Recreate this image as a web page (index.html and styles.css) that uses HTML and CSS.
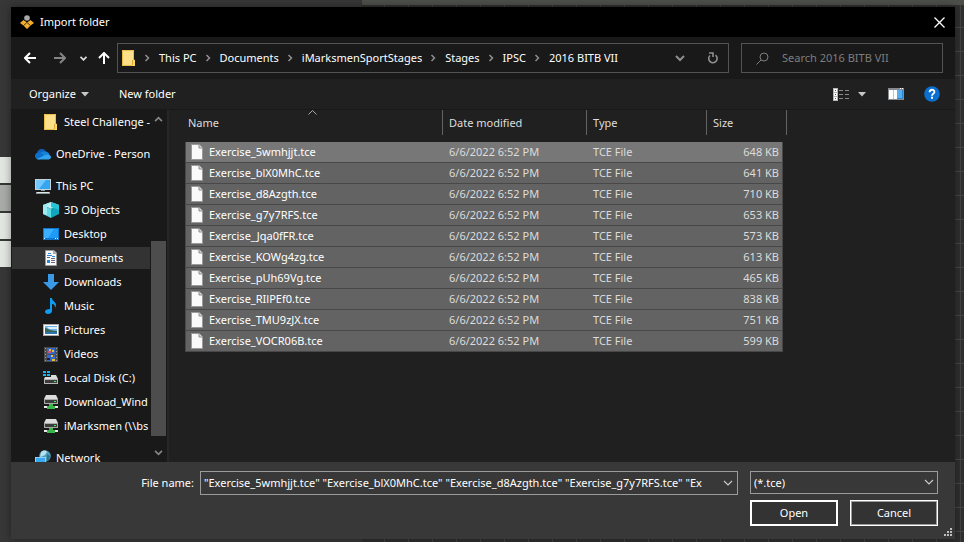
FILE: index.html
```html
<!DOCTYPE html>
<html lang="en">
<head>
<meta charset="utf-8">
<title>Import folder</title>
<link rel="stylesheet" href="styles.css">
</head>
<body>
<svg class="defs" aria-hidden="true">
  <symbol id="folder" viewBox="0 0 14 16"><path fill="#ffe08a" d="M0 0h12v16H0z"/><path fill="none" stroke="#e9bd46" d="M.5.500h11v9.500h1v5.500H.5z"/><path fill="#ffd968" d="M10 10h3v6h-3z"/><path fill="#dca92e" d="M10 10h1v5h-1z"/></symbol>
  <symbol id="crumb" viewBox="0 0 6 8"><path fill="none" stroke="#8f8f8f" stroke-width="1.500" d="M1.500 1l3 3-3 3"/></symbol>
  <symbol id="down" viewBox="0 0 10 7"><path fill="none" stroke="currentColor" stroke-width="1.200" d="M1 1l4 4 4-4"/></symbol>
  <symbol id="tri" viewBox="0 0 8 5"><path fill="#c8c8c8" d="M0 0h8L4 4.500z"/></symbol>
  <symbol id="file" viewBox="0 0 12 16"><path fill="#fafafa" stroke="#9b9b9b" d="M.5.500H8L11.500 4v11.500H.5z"/><path fill="#ddd" stroke="#8a8a8a" d="M8 .500V4h3.500"/></symbol>
  <symbol id="netdrive" viewBox="0 0 16 16"><path fill="#dcdcdc" d="M3 1h10l2 4H1z"/><path fill="#a9a9a9" d="M1 5h14v5H1z"/><path fill="#3b3b3b" d="M2 6h12v3H2z"/><path fill="#3ef04a" d="M11 7h2v1h-2z"/><path fill="#e9e9e9" d="M1 12h14v2H1z"/><path fill="#39b54a" d="M6 10h4v2h2v3H4v-3h2z"/></symbol>
</svg>

<div class="backdrop" aria-hidden="true">
  <div class="side"><i></i><i class="dim"></i><i></i><i></i></div>
  <div class="canvas"></div>
</div>

<main class="dialog">
  <header class="titlebar">
    <svg width="14" height="14" viewBox="0 0 14 14"><path fill="#f2ad2e" d="M3.500 5L7 7.500 10.500 5 14 8l-3.500 2.500L7 14l-3.500-3.500L0 8z"/><path fill="none" stroke="#5b3c08" d="M3.500 10.500L7 7.500l3.500 3"/><circle cx="7" cy="3" r="2.800" fill="#a9a9a9"/></svg>
    <h1>Import folder</h1>
    <button class="close" aria-label="Close"><svg width="11" height="11" viewBox="0 0 11 11"><path stroke="#fff" stroke-width="1.300" d="M.5.500l10 10M10.500.500l-10 10"/></svg></button>
  </header>

  <nav class="navbar" aria-label="Location">
    <div class="history">
      <button aria-label="Back"><svg width="12" height="12" viewBox="0 0 12 12"><path fill="none" stroke="#fff" stroke-width="2" d="M12 6H1.500M6 1L1 6l5 5"/></svg></button>
      <button class="forward" aria-label="Forward"><svg width="12" height="12" viewBox="0 0 12 12"><path fill="none" stroke="#858585" stroke-width="2" d="M0 6h10.500M6 1l5 5-5 5"/></svg></button>
      <button class="recent" aria-label="Recent locations"><svg width="7" height="5" viewBox="0 0 7 5"><path fill="none" stroke="#ddd" stroke-width="1.800" d="M.5.800l3 3 3-3"/></svg></button>
      <button class="up" aria-label="Up"><svg width="12" height="12" viewBox="0 0 12 12"><path fill="none" stroke="#fff" stroke-width="2" d="M6 12V1.500M1 6l5-5 5 5"/></svg></button>
    </div>
    <div class="address">
      <svg class="place" width="14" height="16"><use href="#folder"/></svg>
      <ol>
        <li><svg width="6" height="8"><use href="#crumb"/></svg><a href="#">This PC</a></li>
        <li><svg width="6" height="8"><use href="#crumb"/></svg><a href="#">Documents</a></li>
        <li><svg width="6" height="8"><use href="#crumb"/></svg><a href="#">iMarksmenSportStages</a></li>
        <li><svg width="6" height="8"><use href="#crumb"/></svg><a href="#">Stages</a></li>
        <li><svg width="6" height="8"><use href="#crumb"/></svg><a href="#">IPSC</a></li>
        <li><svg width="6" height="8"><use href="#crumb"/></svg><a href="#">2016 BITB VII</a></li>
      </ol>
      <button class="history-list" aria-label="Previous locations"><svg width="10" height="7" viewBox="0 0 10 7"><path fill="none" stroke="#8f8f8f" stroke-width="2" d="M1 1l4 4 4-4"/></svg></button>
      <button class="refresh" aria-label="Refresh"><svg width="12" height="12" viewBox="0 0 12 12"><path fill="none" stroke="#8f8f8f" stroke-width="1.600" d="M8.500 3.200A4.200 4.200 0 1 1 3 3.500M2 1h4v4"/></svg></button>
    </div>
    <div class="search">
      <svg width="13" height="13" viewBox="0 0 13 13"><circle cx="8" cy="5" r="4" fill="none" stroke="#7d7d7d"/><path stroke="#7d7d7d" d="M5 8L.5 12.500"/></svg>
      <input type="search" aria-label="Search 2016 BITB VII" placeholder="Search 2016 BITB VII">
    </div>
  </nav>

  <div class="toolbar">
    <button>Organize <svg width="8" height="5"><use href="#tri"/></svg></button>
    <button>New folder</button>
    <span class="tools">
      <button aria-label="Change view"><svg width="16" height="13" viewBox="0 0 16 13"><path fill="#b5b5b5" d="M0 0h5v13H0z"/><path fill="#fff" d="M1 1h3v3H1zM1 5h3v3H1zM1 9h3v3H1z"/><path fill="#555" d="M2 2h1v1H2zM2 6h1v1H2z"/><path fill="#c33" d="M2 10h1v1H2z"/><path fill="#8a8a8a" d="M6 2h4v1H6zM12 2h4v1h-4zM6 6h4v1H6zM12 6h4v1h-4zM6 10h4v1H6zM12 10h4v1h-4z"/></svg></button>
      <button class="options" aria-label="View options"><svg width="8" height="5"><use href="#tri"/></svg></button>
      <button class="preview" aria-label="Preview pane"><svg width="16" height="12" viewBox="0 0 16 12"><path fill="#858b91" d="M0 0h16v12H0z"/><path fill="#fff" d="M1 2h4v9H1zM5.500 2H9v9H5.500z"/><path fill="#54aef0" d="M9 2h6v9H9z"/><path fill="#fff" d="M12 0h1v1h-1zM14 0h1v1h-1z"/><path fill="#2d86d4" d="M14 2h1v9H9v-1h5z"/></svg></button>
      <button class="help" aria-label="Help"><svg width="16" height="16" viewBox="0 0 16 16"><circle cx="8" cy="8" r="7.800" fill="#0a6fd0"/><path fill="none" stroke="#fff" stroke-width="1.800" d="M5.600 6.200C5.600 3 10.400 3 10.400 5.900 10.400 7.600 8 7.700 8 9.800"/><path fill="#fff" d="M7 10.800h2v2H7z"/></svg></button>
    </span>
  </div>

  <div class="content">
    <div class="pane">
      <ul class="tree">
        <li class="sub"><svg width="16" height="16"><use href="#folder"/></svg>Steel Challenge -</li>
        <li class="root"><svg width="16" height="16" viewBox="0 0 16 16"><path fill="#0f5fb8" d="M2 8C2 5 4 3 7 3c2 0 3.500 1 4 3l-6 5z"/><path fill="#1583d8" d="M10 5.500c3 0 4.500 2 4.500 4L9 12 4 8c2-2.500 4-2.500 6-2.500z"/><path fill="#0d6fcb" d="M0 10c0-2 1.500-3.500 3.500-3.500C5.500 6.500 7 8 9 9l-5 4.500C1.500 13.500 0 12 0 10z"/><path fill="#2ea5ee" d="M2 13l8-4c2-1.200 6-.500 6 2 0 1.500-1 2.500-2.500 2.500H4c-1 0-1.500 0-2-.500z"/></svg>OneDrive - Person</li>
        <li class="root"><svg width="16" height="16" viewBox="0 0 16 16"><path fill="#c3d3dc" d="M0 1h16v11H0z"/><path fill="#36a5ef" d="M1 2h14v9H1z"/><path fill="#72c7fb" d="M1 2h10L4 11H1z"/><path fill="#8e9aa2" d="M6 12h4v1H6zM1 14h14v2H1z"/><path fill="#dfe7eb" d="M2 14h12v1H2z"/></svg>This PC</li>
        <li class="sub"><svg width="16" height="16" viewBox="0 0 16 16"><path fill="#b9f1f5" d="M8 0l8 3-8 4-8-4z"/><path fill="#5fd9e3" d="M0 3l8 4v9l-8-4z"/><path fill="#0fa6be" d="M16 3L8 7v9l8-4z"/><path fill="#24c4d6" d="M8 0l8 3v5L8 5z"/><path fill="#9debf0" d="M8 0L4 3v10l-4-1V3z"/></svg>3D Objects</li>
        <li class="sub"><svg width="16" height="16" viewBox="0 0 16 16"><path fill="#1276cc" d="M0 2h16v12H0z"/><path fill="#1a9cf7" d="M1 3h14v9H1z"/><path fill="#3bb0ff" d="M1 3h10L5 12H1z"/><path fill="#fff" d="M1 12h1v1H1zM12 12h1v1h-1zM14 12h1v1h-1z"/></svg>Desktop</li>
        <li class="sub current"><svg width="16" height="16" viewBox="0 0 16 16"><path fill="#f8f8f8" stroke="#999" d="M2.500.500H11L13.500 3v12.500h-11z"/><path fill="#aaa" d="M10 0v4h4z"/><path fill="#2b88d8" d="M5 3h3v1H5zM4 5h5v1H4zM9 6h3v1H9zM4 10h3v3H4z"/><path fill="#667" d="M4 7h3v1H4zM8 8h4v1H8zM8 10h4v1H8zM8 12h4v1H8z"/></svg>Documents</li>
        <li class="sub"><svg width="16" height="16" viewBox="0 0 16 16"><path fill="#3b9ae8" d="M5 0h6v8h5l-8 8-8-8h5z"/></svg>Downloads</li>
        <li class="sub"><svg width="16" height="16" viewBox="0 0 16 16"><path fill="#109bf0" d="M7 0h2c0 3 4 4 4 7 0 1-.500 2-1 3 .200-3-1-4-3-4v7c0 2-2 3-4 3s-3-1-3-2.500S4 11 7 11z"/></svg>Music</li>
        <li class="sub"><svg width="16" height="16" viewBox="0 0 16 16"><path fill="#a9a9a9" d="M0 2h16v12H0z"/><path fill="#fff" d="M1 3h14v10H1z"/><path fill="#6eb3e4" d="M2 4h12v8H2z"/><path fill="#dceefa" d="M4 5h10v2H6z"/><path fill="#3a6658" d="M2 6c3 0 4 3 12 3v1H2z"/><path fill="#2a75ad" d="M2 10h12v2H2z"/></svg>Pictures</li>
        <li class="sub"><svg width="16" height="16" viewBox="0 0 16 16"><path fill="#4c4c4c" d="M1 1h14v15H1z"/><path fill="#3468c9" d="M4 2h8v6H4zM4 9h8v6H4z"/><path fill="#e3bb3b" d="M6 3h2v2H6zM9 4h2v2H9zM8 9h2v2H8zM9 13h3v2H9z"/><path fill="#cb527b" d="M5 5h3v2H5z"/><path fill="#17213f" d="M4 12h3v2H4z"/><path stroke="#999" stroke-dasharray="1 2" d="M2.500 2v14M13.500 2v14"/></svg>Videos</li>
        <li class="sub"><svg width="16" height="16" viewBox="0 0 16 16"><path fill="#13b5f4" d="M0 1h3v2H0zM4 1h3v2H4zM0 4h3v2H0zM4 4h3v2H4z"/><path fill="#dcdcdc" d="M8 5h5l2 4H1l1-2h6z"/><path fill="#b5b5b5" d="M1 9h14v5H1z"/><path fill="#3b3b3b" d="M2 10h12v3H2z"/><path fill="#3ef04a" d="M11 11h2v1h-2z"/></svg>Local Disk (C:)</li>
        <li class="sub"><svg width="16" height="16"><use href="#netdrive"/></svg>Download_Wind</li>
        <li class="sub"><svg width="16" height="16"><use href="#netdrive"/></svg>iMarksmen (\\bs</li>
        <li class="root"><svg width="16" height="16" viewBox="0 0 16 16"><circle cx="10" cy="6" r="5.800" fill="#4f9dbd"/><path fill="#b7e1ec" d="M6 2c2-2 5-2 6 0l-2 3-2 1-3 1z"/><path fill="#2f748f" d="M12 4l3 2-1 4-2 1z"/><path fill="#8dd3fb" d="M0 7h11v8H0z"/><path fill="#3aa9f2" d="M1 8h9v6H1z"/></svg>Network</li>
      </ul>
      <div class="scrollbar" aria-hidden="true">
        <svg width="9" height="6" viewBox="0 0 10 7"><path fill="none" stroke="#858585" stroke-width="2" d="M1 6l4-4 4 4"/></svg>
        <div class="track"><div class="thumb"></div></div>
        <svg width="9" height="6" viewBox="0 0 10 7"><path fill="none" stroke="#858585" stroke-width="2" d="M1 1l4 4 4-4"/></svg>
      </div>
    </div>

    <div class="files">
      <table>
        <colgroup><col class="c-name"><col class="c-date"><col class="c-type"><col class="c-size"><col class="c-end"></colgroup>
        <thead><tr>
          <th><span>Name</span><svg class="sort" width="9" height="5" viewBox="0 0 9 5"><path fill="none" stroke="#aaa" d="M.5 4.500l4-4 4 4"/></svg></th>
          <th><span>Date modified</span></th><th><span>Type</span></th><th class="last"><span>Size</span></th><td class="end"></td>
        </tr></thead>
        <tbody>
          <tr><td><svg width="12" height="16"><use href="#file"/></svg>Exercise_5wmhjjt.tce</td><td>6/6/2022 6:52 PM</td><td>TCE File</td><td>648 KB</td></tr>
          <tr><td><svg width="12" height="16"><use href="#file"/></svg>Exercise_blX0MhC.tce</td><td>6/6/2022 6:52 PM</td><td>TCE File</td><td>641 KB</td></tr>
          <tr><td><svg width="12" height="16"><use href="#file"/></svg>Exercise_d8Azgth.tce</td><td>6/6/2022 6:52 PM</td><td>TCE File</td><td>710 KB</td></tr>
          <tr><td><svg width="12" height="16"><use href="#file"/></svg>Exercise_g7y7RFS.tce</td><td>6/6/2022 6:52 PM</td><td>TCE File</td><td>653 KB</td></tr>
          <tr><td><svg width="12" height="16"><use href="#file"/></svg>Exercise_Jqa0fFR.tce</td><td>6/6/2022 6:52 PM</td><td>TCE File</td><td>573 KB</td></tr>
          <tr><td><svg width="12" height="16"><use href="#file"/></svg>Exercise_KOWg4zg.tce</td><td>6/6/2022 6:52 PM</td><td>TCE File</td><td>613 KB</td></tr>
          <tr><td><svg width="12" height="16"><use href="#file"/></svg>Exercise_pUh69Vg.tce</td><td>6/6/2022 6:52 PM</td><td>TCE File</td><td>465 KB</td></tr>
          <tr><td><svg width="12" height="16"><use href="#file"/></svg>Exercise_RIlPEf0.tce</td><td>6/6/2022 6:52 PM</td><td>TCE File</td><td>838 KB</td></tr>
          <tr><td><svg width="12" height="16"><use href="#file"/></svg>Exercise_TMU9zJX.tce</td><td>6/6/2022 6:52 PM</td><td>TCE File</td><td>751 KB</td></tr>
          <tr><td><svg width="12" height="16"><use href="#file"/></svg>Exercise_VOCR06B.tce</td><td>6/6/2022 6:52 PM</td><td>TCE File</td><td>599 KB</td></tr>
        </tbody>
      </table>
    </div>
  </div>

  <footer class="footer">
    <label for="filename">File name:</label>
    <div class="combo">
      <input id="filename" type="text" value="&quot;Exercise_5wmhjjt.tce&quot; &quot;Exercise_blX0MhC.tce&quot; &quot;Exercise_d8Azgth.tce&quot; &quot;Exercise_g7y7RFS.tce&quot; &quot;Ex">
      <button aria-label="Recent file names"><svg width="10" height="7"><use href="#down"/></svg></button>
    </div>
    <div class="filter">
      <select aria-label="File type"><option>(*.tce)</option></select>
      <svg width="10" height="7"><use href="#down"/></svg>
    </div>
    <div class="actions"><button class="open">Open</button><button class="cancel">Cancel</button></div>
    <svg class="grip" width="8" height="8" viewBox="0 0 8 8"><path fill="#bdbdbd" d="M6 0h2v2H6zM3 3h2v2H3zM6 3h2v2H6zM0 6h2v2H0zM3 6h2v2H3zM6 6h2v2H6z"/></svg>
  </footer>
</main>
</body>
</html>
```
FILE: styles.css
```css
* { box-sizing: border-box; }

body {
  margin: 0;
  min-height: 100vh;
  display: flex;
  padding: 7px 9px 3px 11px;
  background: #333;
  color: #fff;
  font: 11px/16px "Noto Sans", "Open Sans", sans-serif;
}

button, input, select { font: inherit; color: inherit; margin: 0; }
button { background: none; border: 0; padding: 0; display: flex; align-items: center; justify-content: center; }
svg { display: block; flex: none; }
ul, ol { list-style: none; margin: 0; padding: 0; }
a { color: inherit; text-decoration: none; }
.defs { position: absolute; width: 0; height: 0; }

/* Application behind the dialog */
.backdrop { position: absolute; inset: 0; display: flex; z-index: -1; }
.side { width: 362px; background: #373737; padding-top: 157px; display: flex; flex-direction: column; gap: 2px; }
.side i { width: 11px; height: 26px; background: #e2e6e1; }
.side .dim { background: #a9aba8; }
.canvas {
  flex: 1;
  border-top: 5px solid #4d4f4a;
  background:
    repeating-linear-gradient(90deg, transparent 0 22px, #434343 22px 23px, transparent 23px 24px),
    repeating-linear-gradient(#2f2f2f 0 22px, #474747 22px 23px, #2f2f2f 23px 24px);
}

.dialog { flex: 1; min-width: 0; display: flex; flex-direction: column; background: #202020; box-shadow: 0 0 8px #0006; }

.titlebar { height: 30px; background: #000; display: flex; align-items: center; gap: 6px; padding: 0 10px 0 9px; }
.titlebar h1 { flex: 1; margin: 0; font-size: 11px; font-weight: 400; }

.navbar { height: 42px; background: #191919; display: flex; align-items: center; padding: 0 12px 0 13px; }
.history { display: flex; align-items: center; width: 93px; }
.history button { width: 12px; margin-right: 18px; }
.history .forward { margin-right: 11px; }
.history .recent { margin-right: 9px; }
.history .up { margin-right: 0; }
.address { flex: 1; min-width: 0; height: 30px; border: 1px solid #535353; display: flex; align-items: center; padding-left: 4px; }
.address ol { flex: 1; display: flex; }
.address li { display: flex; align-items: center; }
.address li svg { margin: 0 9px 0 8px; }
.history-list { width: 36px; }
.refresh { width: 30px; }
.search { width: 202px; height: 30px; margin-left: 12px; border: 1px solid #535353; display: flex; align-items: center; gap: 13px; padding-left: 14px; }
.search input { flex: 1; min-width: 0; border: 0; outline: 0; padding: 0; background: none; }
.search input::placeholder { color: #7d7d7d; }

.toolbar { height: 31px; border-bottom: 1px solid #191919; display: flex; align-items: center; gap: 30px; padding: 0 15px 0 18px; }
.toolbar button { gap: 5px; }
.tools { margin-left: auto; display: flex; align-items: center; }
.tools .options { margin-left: 9px; }
.tools .preview { margin-left: 22px; }
.tools .help { margin-left: 20px; }

.content { height: 352px; display: flex; overflow: hidden; }
.pane { width: 158px; display: flex; background: #191919; border-right: 2px solid #272727; flex: none; }
.tree { flex: 1; min-width: 0; overflow: hidden; padding-left: 1px; }
.tree li { height: 24px; display: flex; align-items: center; gap: 5px; white-space: nowrap; overflow: hidden; border: solid #191919; border-width: 1px 0; }
.tree .root { padding-left: 23px; margin-top: 8px; }
.tree .sub { padding-left: 31px; }
.tree .current { background: #333; }
.scrollbar { width: 17px; display: flex; flex-direction: column; align-items: center; padding: 6px 1px 6px 0; }
.track { flex: 1; width: 15px; display: flex; flex-direction: column; justify-content: flex-end; padding-bottom: 14px; }
.thumb { height: 195px; background: #4d4d4d; }

.files { flex: 1; min-width: 0; padding-left: 16px; }
table { width: 602px; table-layout: fixed; border-collapse: separate; border-spacing: 0; }
.c-name { width: 258px; }
.c-date { width: 144px; }
.c-type { width: 120px; }
.c-size { width: 76px; }
.c-end { width: 4px; }
th { position: relative; padding: 0 0 7px; font-weight: 400; text-align: left; color: #dedede; }
th span { display: block; height: 25px; line-height: 25px; padding-left: 6px; border-right: 1px solid #636363; }
th:first-child span { padding-left: 3px; }
th.last span { border-right: 0; }
td.end { padding: 0 0 7px; }
td.end::before { content: ""; display: block; height: 25px; border-right: 1px solid #636363; }
.sort { position: absolute; left: 123px; top: 0; }
tbody td { height: 21px; padding: 0 6px; background: #636363; border-bottom: 1px solid #484848; color: #dcdcdc; line-height: 20px; white-space: nowrap; }
tbody td:first-child { display: flex; align-items: center; gap: 6px; padding-left: 5px; border-left: 1px solid #484848; color: #fff; }
tbody td:last-child { text-align: right; padding-right: 3px; border-right: 1px solid #484848; }
tbody tr:first-child td { background: #777; }

.footer {
  position: relative;
  flex: 1;
  background: #383838;
  display: grid;
  grid-template-columns: 184px 1fr 188px;
  grid-template-rows: 24px 26px;
  gap: 5px 0;
  padding: 9px 17px 12px 0;
}
.footer label { text-align: right; padding-right: 1px; line-height: 24px; }
.combo { display: flex; margin: 0 12px 0 5px; border: 1px solid #9b9b9b; color: #c8c8c8; }
.combo input { flex: 1; min-width: 0; border: 0; outline: 0; padding: 0 0 0 3px; background: none; color: #fff; }
.combo button { width: 18px; }
.filter { position: relative; height: 23px; color: #c8c8c8; }
.filter select { width: 100%; height: 100%; appearance: none; background: #383838; border: 1px solid #9b9b9b; border-radius: 0; padding: 0 3px; color: #fff; }
.filter svg { position: absolute; right: 4px; top: 8px; pointer-events: none; }
.actions { grid-column: 3; display: grid; grid-template-columns: 1fr 1fr; gap: 12px; }
.actions button { background: #333; border: 2px solid #fff; }
.actions .cancel { border: 1px solid #fff; box-shadow: inset 0 0 0 1px #9b9b9b; }
.grip { position: absolute; right: 3px; bottom: 3px; }
```
